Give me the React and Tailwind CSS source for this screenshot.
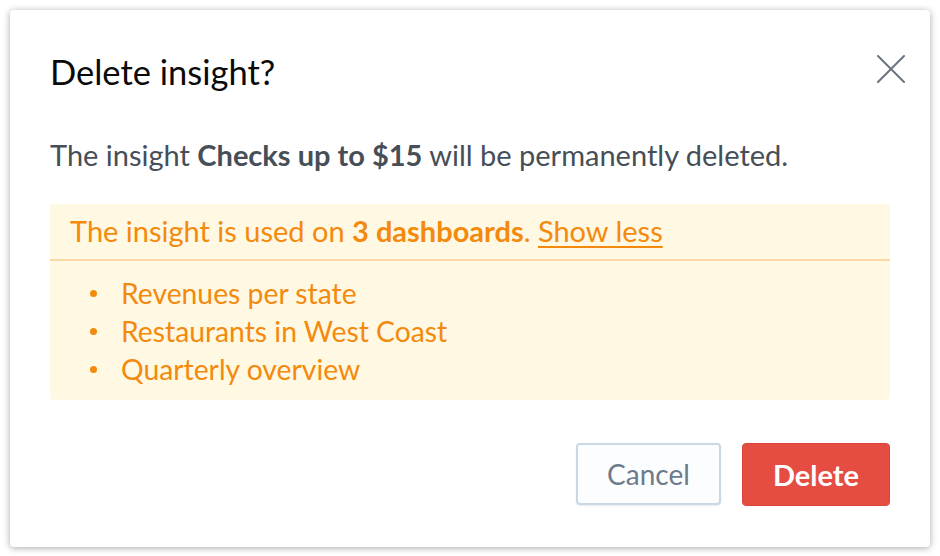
import React from "react";

const DASHBOARDS = [
  "Revenues per state",
  "Restaurants in West Coast",
  "Quarterly overview",
];

export default function App() {
  return (
    <div
      className="min-h-[556px] w-[940px] bg-white p-[10px]"
      style={{ fontFamily: "Lato, 'Noto Sans', sans-serif" }}
    >
      <div className="relative w-[920px] rounded-[4px] bg-white px-[40px] pb-[41px] pt-[42px] shadow-[0_1px_7px_rgba(0,0,0,0.35)]">
        <button
          type="button"
          aria-label="Close"
          className="absolute right-[25px] top-[45px] h-[28px] w-[28px] text-[#6b747e]"
        >
          <svg viewBox="0 0 28 28" width="28" height="28" fill="none">
            <path
              d="M1 1L27 27M27 1L1 27"
              stroke="currentColor"
              strokeWidth="2"
              strokeLinecap="round"
            />
          </svg>
        </button>

        <h1 className="text-[34.5px] leading-[40px] text-[#0a0a0a]">
          Delete insight?
        </h1>

        <p className="mt-[47px] text-[29px] leading-[32px] text-[#464e57]">
          The insight <strong className="font-bold">Checks up to $15</strong>{" "}
          will be permanently deleted.
        </p>

        <div className="mt-[33px] rounded-[4px] bg-[#fff8e2] text-[#f38a0d]">
          <div className="border-b-2 border-[#fcd9a8] px-[20px] pb-[12px] pt-[11px] text-[29px] leading-[32px]">
            The insight is used on <strong className="font-bold">3 dashboards</strong>.{" "}
            <a href="#" className="underline underline-offset-[4px]">
              Show less
            </a>
          </div>
          <ul className="px-[20px] pb-[12px] pt-[13px] text-[28.3px]">
            {DASHBOARDS.map((name) => (
              <li key={name} className="flex items-center leading-[38px]">
                <span className="ml-[20px] mr-[24px] h-[7px] w-[7px] shrink-0 rounded-full bg-[#f38a0d]" />
                {name}
              </li>
            ))}
          </ul>
        </div>

        <div className="mt-[43px] flex justify-end gap-[21px]">
          <button
            type="button"
            className="h-[62px] w-[145px] rounded-[4px] border-2 border-[#cbd7e2] bg-[#fcfdfe] text-[28px] text-[#6c7b8b] shadow-[0_1px_2px_rgba(0,0,0,0.08)]"
          >
            Cancel
          </button>
          <button
            type="button"
            className="h-[63px] w-[148px] rounded-[4px] border border-[#d8433a] bg-[#e54d42] text-[29px] font-bold text-white"
          >
            Delete
          </button>
        </div>
      </div>
    </div>
  );
}
